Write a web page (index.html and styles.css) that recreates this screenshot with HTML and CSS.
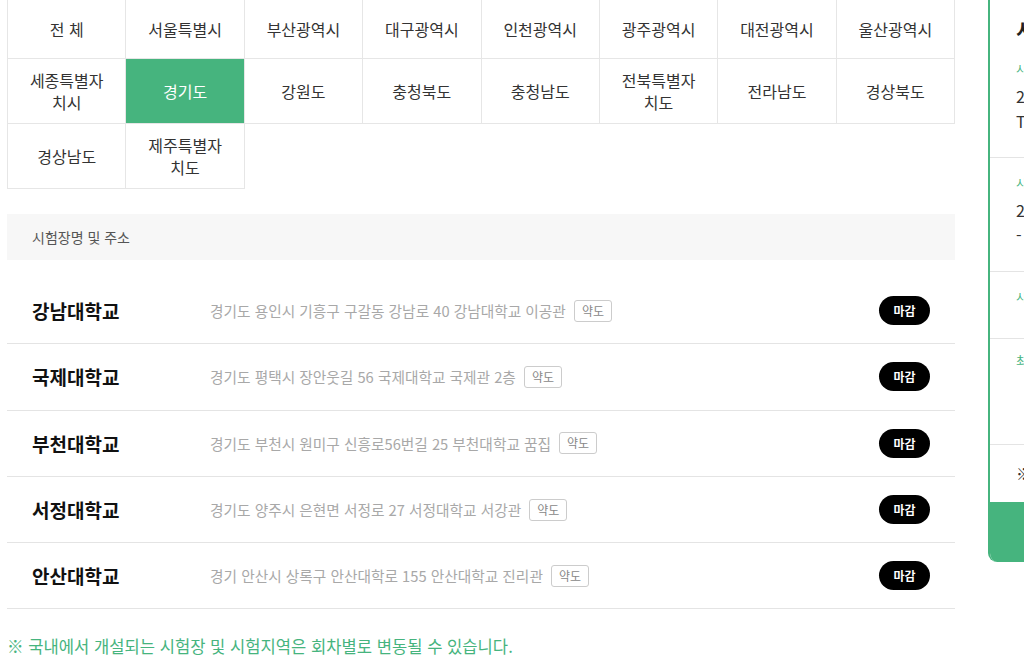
FILE: index.html
```html
<!DOCTYPE html>
<html lang="ko">
<head>
<meta charset="utf-8">
<title>시험장 안내</title>
<link rel="stylesheet" href="styles.css">
</head>
<body>
<div class="page">
  <main class="main">
    <div class="regions">
      <div class="region">전 체</div>
      <div class="region">서울특별시</div>
      <div class="region">부산광역시</div>
      <div class="region">대구광역시</div>
      <div class="region">인천광역시</div>
      <div class="region">광주광역시</div>
      <div class="region">대전광역시</div>
      <div class="region">울산광역시</div>
      <div class="region">세종특별자치시</div>
      <div class="region active">경기도</div>
      <div class="region">강원도</div>
      <div class="region">충청북도</div>
      <div class="region">충청남도</div>
      <div class="region">전북특별자치도</div>
      <div class="region">전라남도</div>
      <div class="region">경상북도</div>
      <div class="region">경상남도</div>
      <div class="region">제주특별자치도</div>
    </div>

    <div class="list-head">시험장명 및 주소</div>
    <ul class="sites">
      <li class="site">
        <span class="site-name">강남대학교</span>
        <span class="site-addr">경기도 용인시 기흥구 구갈동 강남로 40 강남대학교 이공관</span>
        <span class="map-tag">약도</span>
        <span class="status">마감</span>
      </li>
      <li class="site">
        <span class="site-name">국제대학교</span>
        <span class="site-addr">경기도 평택시 장안웃길 56 국제대학교 국제관 2층</span>
        <span class="map-tag">약도</span>
        <span class="status">마감</span>
      </li>
      <li class="site">
        <span class="site-name">부천대학교</span>
        <span class="site-addr">경기도 부천시 원미구 신흥로56번길 25 부천대학교 꿈집</span>
        <span class="map-tag">약도</span>
        <span class="status">마감</span>
      </li>
      <li class="site">
        <span class="site-name">서정대학교</span>
        <span class="site-addr">경기도 양주시 은현면 서정로 27 서정대학교 서강관</span>
        <span class="map-tag">약도</span>
        <span class="status">마감</span>
      </li>
      <li class="site">
        <span class="site-name">안산대학교</span>
        <span class="site-addr">경기 안산시 상록구 안산대학로 155 안산대학교 진리관</span>
        <span class="map-tag">약도</span>
        <span class="status">마감</span>
      </li>
    </ul>
    <p class="notice">※ 국내에서 개설되는 시험장 및 시험지역은 회차별로 변동될 수 있습니다.</p>
  </main>

  <aside class="side">
    <div class="side-card">
      <h2 class="side-title">시험 일정</h2>
      <div class="side-sec">
        <div class="side-label">시험일자</div>
        <div class="side-value">2025.05.31 (토)<br>TIME 09:20 ~ 12:10</div>
      </div>
      <div class="side-sec">
        <div class="side-label">시험 접수기간</div>
        <div class="side-value">2025.04.01 10:00<br>- 2025.04.20 23:59</div>
      </div>
      <div class="side-sec side-row">
        <div class="side-label">시험 성적발표</div>
        <div class="side-value">2025.06.13 (금)</div>
      </div>
      <div class="side-sec side-row side-tall">
        <div class="side-label">최종 안내</div>
        <div class="side-value">수험표 및 신분증 지참<br>입실 시간 엄수<br>고사장 확인 필수</div>
      </div>
      <div class="side-sec side-note">※ 시험장 변경은 불가합니다.</div>
      <div class="side-foot">접수하기</div>
    </div>
  </aside>
</div>
</body>
</html>
```

FILE: styles.css
```css
* {
  box-sizing: border-box;
}

html, body {
  margin: 0;
  padding: 0;
  background: #ffffff;
  overflow: hidden;
}

body {
  font-family: "Noto Sans CJK KR", "Noto Sans", sans-serif;
  color: #333333;
}

.page {
  display: flex;
  align-items: flex-start;
  padding-left: 7px;
  width: 1400px;
}

.main {
  width: 948px;
  flex: none;
}

/* region grid */
.regions {
  display: grid;
  grid-template-columns: repeat(8, 1fr);
  border-top: 1px solid #e6e6e6;
  border-left: 1px solid #e6e6e6;
  margin-top: -1px;
}

.region {
  display: flex;
  align-items: center;
  justify-content: center;
  text-align: center;
  min-height: 59px;
  padding: 10px 16px;
  font-size: 16px;
  line-height: 22px;
  color: #333333;
  border-right: 1px solid #e6e6e6;
  border-bottom: 1px solid #e6e6e6;
}

.region.active {
  background: #46b47e;
  color: #ffffff;
}

/* list */
.list-head {
  margin-top: 25px;
  height: 46px;
  background: #f7f7f7;
  padding-left: 25px;
  display: flex;
  align-items: center;
  font-size: 14px;
  color: #555555;
}

.sites {
  list-style: none;
  margin: 18px 0 0;
  padding: 0;
}

.site {
  display: flex;
  align-items: center;
  height: 66.3px;
  padding: 0 25px;
  border-bottom: 1px solid #e4e4e4;
}

.site-name {
  width: 178px;
  flex: none;
  font-size: 19px;
  font-weight: 700;
  color: #111111;
}

.site-addr {
  font-size: 14.7px;
  color: #a8a8a8;
}

.map-tag {
  margin-left: 8px;
  height: 22px;
  padding: 0 7px;
  border: 1px solid #cccccc;
  border-radius: 3px;
  font-size: 12px;
  line-height: 20px;
  color: #888888;
}

.status {
  margin-left: auto;
  width: 51px;
  height: 29px;
  border-radius: 15px;
  background: #000000;
  color: #ffffff;
  font-size: 12px;
  font-weight: 700;
  display: flex;
  align-items: center;
  justify-content: center;
}

.notice {
  margin: 25px 0 0;
  font-size: 16.6px;
  line-height: 24px;
  color: #46b47e;
}

/* sidebar */
.side {
  margin-left: 33px;
  width: 320px;
  flex: none;
}

.side-card {
  border-left: 2px solid #46b47e;
  border-bottom-left-radius: 9px;
  overflow: hidden;
  background: #ffffff;
}

.side-title {
  margin: 0;
  padding: 16px 26px 0;
  font-size: 20px;
  line-height: 28px;
  font-weight: 700;
  color: #222222;
}

.side-sec {
  padding: 16px 26px 23px;
  border-bottom: 1px solid #e4e4e4;
}

.side-label {
  font-size: 12px;
  line-height: 18px;
  color: #46b47e;
  margin-bottom: 6px;
}

.side-value {
  font-size: 16px;
  line-height: 25px;
  color: #333333;
}

.side-row {
  display: flex;
  align-items: flex-start;
  padding-bottom: 25px;
}

.side-row .side-label {
  width: 120px;
  flex: none;
  margin-bottom: 0;
}

.side-tall {
  padding-top: 13px;
  padding-bottom: 17px;
}

.side-note {
  padding: 16px 26px 16px;
  font-size: 16px;
  line-height: 25px;
  color: #333333;
  border-bottom: none;
}

.side-foot {
  height: 60px;
  background: #46b47e;
  color: #ffffff;
  display: flex;
  align-items: center;
  justify-content: center;
  font-size: 17px;
  font-weight: 700;
}
```
